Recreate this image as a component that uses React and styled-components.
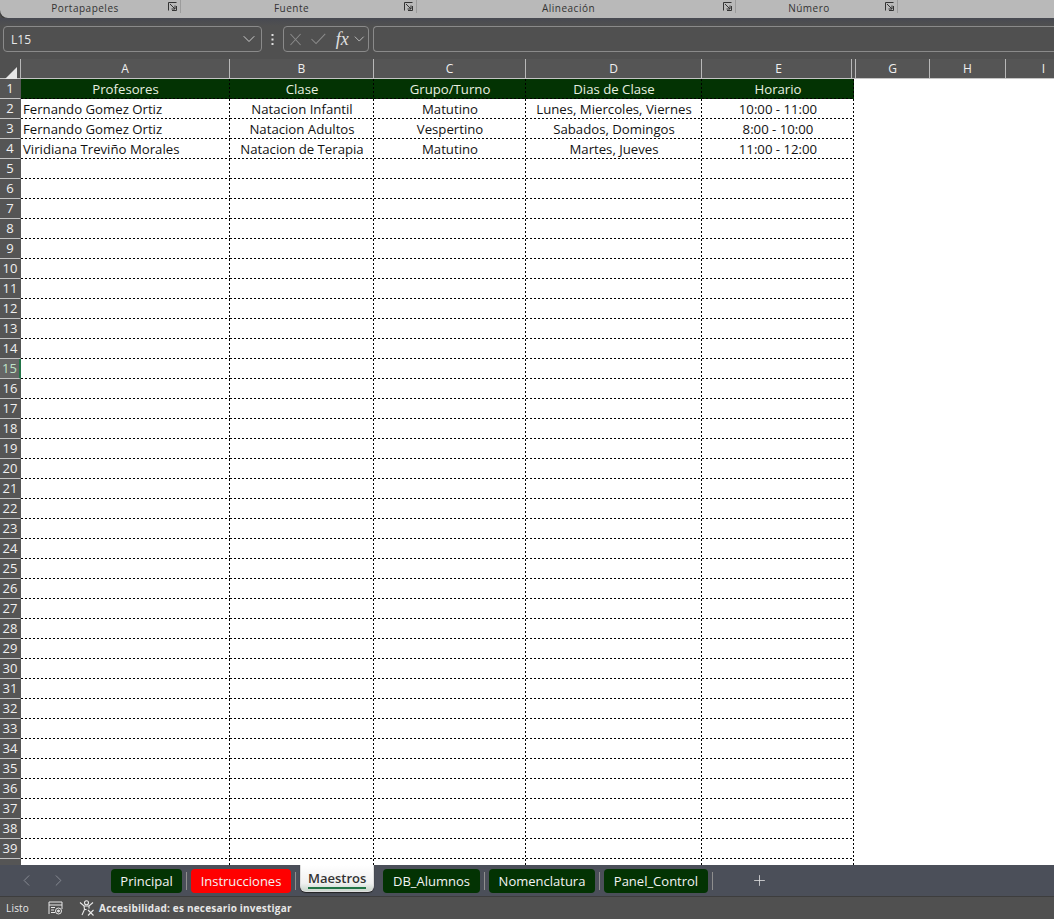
import React from "react";
import styled, { createGlobalStyle } from "styled-components";
import { ChevronDown, ChevronLeft, ChevronRight, Plus } from "lucide-react";

const columns = [
  { name: "A", width: 209 },
  { name: "B", width: 144 },
  { name: "C", width: 152 },
  { name: "D", width: 176 },
  { name: "E", width: 152, head: 150, pad: 4 },
];
const emptyColumns = [
  { name: "G", width: 74 },
  { name: "H", width: 76 },
  { name: "I", width: 76 },
];
const titles = ["Profesores", "Clase", "Grupo/Turno", "Dias de Clase", "Horario"];
const data = [
  ["Fernando Gomez Ortiz", "Natacion Infantil", "Matutino", "Lunes, Miercoles, Viernes", "10:00 - 11:00"],
  ["Fernando Gomez Ortiz", "Natacion Adultos", "Vespertino", "Sabados, Domingos", "8:00 - 10:00"],
  ["Viridiana Treviño Morales", "Natacion de Terapia", "Matutino", "Martes, Jueves", "11:00 - 12:00"],
];
const groups = [
  { label: "Portapapeles", width: 181, inset: 10 },
  { label: "Fuente", width: 236, inset: 14 },
  { label: "Alineación", width: 319, inset: 15 },
  { label: "Número", width: 162, inset: 15 },
];
const sheets = [
  { label: "Principal", width: 71 },
  { label: "Instrucciones", width: 100, color: "#ff0000" },
  { label: "Maestros", active: true },
  { label: "DB_Alumnos", width: 97 },
  { label: "Nomenclatura", width: 106 },
  { label: "Panel_Control", width: 104 },
];

const DialogIcon = () => (
  <svg width="9" height="9" viewBox="0 0 9 9" fill="none" stroke="#333">
    <path d="M0.5 8.5V0.5H8.5M2 2L7 7M7 3.5V7H3.5M8.5 4V8.5H4" strokeWidth="1" />
  </svg>
);

const App = () => {
  const rows = Array.from({ length: 40 }, (_, i) => i + 1);
  return (
    <Page>
      <GlobalStyle />
      <Ribbon>
        {groups.map((g) => (
          <RibbonGroup key={g.label} $width={g.width} $inset={g.inset}>
            <span>{g.label}</span>
            <DialogIcon />
          </RibbonGroup>
        ))}
      </Ribbon>
      <FormulaBar>
        <NameBox>
          L15
          <ChevronDown size={20} strokeWidth={1.1} color="#d8d8d8" />
        </NameBox>
        <Dots>
          <svg width="3" height="11" viewBox="0 0 3 11" fill="#e0e0e0">
            <rect x="0.5" y="0" width="2" height="2" />
            <rect x="0.5" y="4.5" width="2" height="2" />
            <rect x="0.5" y="9" width="2" height="2" />
          </svg>
        </Dots>
        <FormulaButtons>
          <svg width="12" height="13" viewBox="0 0 12 13" fill="none" stroke="#8c8c8c" strokeWidth="1.1">
            <path d="M0.5 0.5L11.5 12.5M11.5 0.5L0.5 12.5" />
          </svg>
          <svg width="16" height="12" viewBox="0 0 16 12" fill="none" stroke="#8c8c8c" strokeWidth="1.1">
            <path d="M0.5 6L5.5 11L15.5 0.5" />
          </svg>
          <Fx>fx</Fx>
          <ChevronDown size={18} strokeWidth={1.2} color="#d0d0d0" />
        </FormulaButtons>
        <FormulaInput />
      </FormulaBar>
      <Sheet>
        <HeaderRow>
          <Corner>
            <svg width="14" height="14" viewBox="0 0 14 14">
              <path d="M13 1V13H1Z" fill="#e6e6e6" />
            </svg>
          </Corner>
          {columns.map((c) => (
            <ColHead key={c.name} $width={c.head || c.width} $pad={c.pad}>{c.name}</ColHead>
          ))}
          <HiddenGap />
          {emptyColumns.map((c) => (
            <ColHead key={c.name} $width={c.width} $pad={c.pad}>{c.name}</ColHead>
          ))}
        </HeaderRow>
        <Rows>
          {rows.map((r) => (
            <Row key={r}>
              <RowHead $selected={r === 15}>{r < 40 ? r : ""}</RowHead>
              {columns.map((c, i) => {
                const text = r === 1 ? titles[i] : data[r - 2]?.[i];
                return (
                  <Cell key={c.name} $width={c.width} $title={r === 1} $left={i === 0 && r > 1}>
                    {text}
                  </Cell>
                );
              })}
            </Row>
          ))}
        </Rows>
      </Sheet>
      <TabBar>
        <TabArrows>
          <ChevronLeft size={19} strokeWidth={1.1} color="#8f939b" />
          <ChevronRight size={19} strokeWidth={1.1} color="#8f939b" />
        </TabArrows>
        <Tabs>
          {sheets.map((s) =>
            s.active ? (
              <ActiveTab key={s.label}>
                <span>{s.label}</span>
              </ActiveTab>
            ) : (
              <Tab key={s.label} $width={s.width} $color={s.color}>{s.label}</Tab>
            )
          )}
        </Tabs>
        <AddSheet>
          <Plus size={17} strokeWidth={1.1} color="#e4e4e4" />
        </AddSheet>
      </TabBar>
      <StatusBar>
        <span>Listo</span>
        <svg width="15" height="14" viewBox="0 0 15 14" fill="none" stroke="#e8e8e8">
          <path d="M1 13V1H14V8M1 4H14M3 6.5H7M3 9H6M3 11.5H7" />
          <circle cx="10.5" cy="10" r="3" />
          <circle cx="10.5" cy="10" r="1" fill="#e8e8e8" />
        </svg>
        <Accessibility>
          <svg width="16" height="16" viewBox="0 0 16 16" fill="none" stroke="#e8e8e8" strokeWidth="1.1">
            <circle cx="7.5" cy="2.8" r="2" />
            <path d="M1 2.5L5 6H10L14 2.5M5 6L5.5 9.5L3 15M10 6V8.5M5.5 9.5H7.5" />
            <path d="M9 10L14.5 15.5M14.5 10L9 15.5" />
          </svg>
          Accesibilidad: es necesario investigar
        </Accessibility>
      </StatusBar>
    </Page>
  );
};

export default App;

const GlobalStyle = createGlobalStyle`
  html, body {
    margin: 0;
    padding: 0;
    overflow: hidden;
    background: #505050;
  }
`;

const Page = styled.div`
  width: 1054px;
  height: 919px;
  display: flex;
  flex-direction: column;
  overflow: hidden;
  font-family: "Open Sans", "Noto Sans", sans-serif;
  background: #505050;
`;

const Ribbon = styled.div`
  height: 18px;
  flex: none;
  display: flex;
  background: #b9b9b9;
  border-radius: 0 0 0 8px;
  box-shadow: 0 1px 2px #2a2a2a;
`;

const RibbonGroup = styled.div`
  width: ${(p) => p.$width}px;
  height: 13px;
  box-sizing: border-box;
  padding-right: 3px;
  position: relative;
  display: flex;
  align-items: center;
  justify-content: flex-end;
  border-right: 1px solid #9c9c9c;
  font-size: 10px;
  letter-spacing: 0.5px;
  color: #333;

  span {
    position: absolute;
    left: 0;
    right: ${(p) => p.$inset}px;
    top: 0;
    text-align: center;
    line-height: 16px;
  }
`;

const FormulaBar = styled.div`
  height: 41px;
  flex: none;
  box-sizing: border-box;
  padding: 8px 0 7px 3px;
  display: flex;
  align-items: stretch;
  background: linear-gradient(#484a52 0, #505050 8px);
`;

const NameBox = styled.div`
  width: 259px;
  box-sizing: border-box;
  padding: 0 2px 0 7px;
  display: flex;
  align-items: center;
  justify-content: space-between;
  border: 1px solid #8a8a8a;
  border-radius: 4px;
  font-size: 12px;
  color: #e8e8e8;
`;

const Dots = styled.div`
  width: 21px;
  display: flex;
  align-items: center;
  justify-content: center;
`;

const FormulaButtons = styled.div`
  width: 86px;
  box-sizing: border-box;
  padding-left: 6px;
  display: flex;
  align-items: center;
  gap: 10px;
  border: 1px solid #8a8a8a;
  border-radius: 4px;

  svg:last-child {
    margin-left: -9px;
  }
`;

const Fx = styled.i`
  width: 16px;
  font-family: "Liberation Serif", serif;
  font-size: 18px;
  line-height: 20px;
  letter-spacing: 0;
  color: #e0e0e0;
`;

const FormulaInput = styled.div`
  flex: 1;
  margin-left: 4px;
  border: 1px solid #8a8a8a;
  border-right: none;
  border-radius: 4px 0 0 4px;
`;

const Sheet = styled.div`
  height: 806px;
  flex: none;
  overflow: hidden;
  background: #fff;
`;

const HeaderRow = styled.div`
  height: 20px;
  display: flex;
  background: #555;
  border-bottom: 1px solid #c4c4c4;
  box-sizing: border-box;
`;

const Corner = styled.div`
  width: 21px;
  flex: none;
  box-sizing: border-box;
  padding: 4px 0 0 4px;
  border-right: 1px solid #b8b8b8;
  background: #505050;
`;

const ColHead = styled.div`
  width: ${(p) => p.$width}px;
  flex: none;
  box-sizing: border-box;
  padding-left: ${(p) => p.$pad || 0}px;
  border-right: 1px solid #b8b8b8;
  text-align: center;
  font-size: 12px;
  line-height: 19px;
  color: #f0f0f0;
`;

const HiddenGap = styled.div`
  width: 4px;
  flex: none;
  box-sizing: border-box;
  border-right: 1px solid #b8b8b8;
`;

const Rows = styled.div`
  display: flex;
  flex-direction: column;
`;

const Row = styled.div`
  height: 20px;
  flex: none;
  display: flex;
`;

const RowHead = styled.div`
  width: 21px;
  flex: none;
  box-sizing: border-box;
  text-align: center;
  font-size: 13px;
  line-height: 19px;
  color: ${(p) => (p.$selected ? "#bfe3c8" : "#f0f0f0")};
  background: ${(p) => (p.$selected ? "#666" : "#555")};
  border-bottom: 1px solid #c4c4c4;
  border-right: ${(p) => (p.$selected ? "2px solid #217346" : "1px solid #555")};
`;

const Cell = styled.div`
  width: ${(p) => p.$width}px;
  flex: none;
  box-sizing: border-box;
  padding-left: ${(p) => (p.$left ? "2px" : "0")};
  text-align: ${(p) => (p.$left ? "left" : "center")};
  font-size: 13.2px;
  line-height: 20px;
  white-space: nowrap;
  overflow: hidden;
  color: ${(p) => (p.$title ? "#e8f0e0" : "#111")};
  background-color: ${(p) => (p.$title ? "#033303" : "#fff")};
  background-image: repeating-linear-gradient(90deg, #000 0 2px, transparent 2px 4px),
    repeating-linear-gradient(180deg, #000 0 2px, transparent 2px 4px);
  background-size: 100% 1px, 1px 100%;
  background-position: left bottom, right top;
  background-repeat: no-repeat;
`;

const TabBar = styled.div`
  height: 32px;
  flex: none;
  box-sizing: border-box;
  display: flex;
  align-items: flex-start;
  background: #4b4f59;
  border-bottom: 1px solid #3d3d3d;
`;

const TabArrows = styled.div`
  width: 111px;
  height: 31px;
  box-sizing: border-box;
  padding-left: 17px;
  flex: none;
  display: flex;
  align-items: center;
  gap: 13px;
`;

const Tabs = styled.div`
  display: flex;
  align-items: flex-start;
  gap: 9px;
`;

const Tab = styled.div`
  width: ${(p) => p.$width}px;
  height: 24px;
  margin-top: 4px;
  position: relative;
  flex: none;
  text-align: center;
  font-size: 13px;
  line-height: 24px;
  color: #f4f4f4;
  border-radius: 4px;
  background: ${(p) => p.$color || "#033303"};

  &::after {
    content: "";
    position: absolute;
    right: -5px;
    top: 3px;
    height: 18px;
    border-right: 1px solid #8e8e8e;
  }
`;

const ActiveTab = styled.div`
  width: 74px;
  height: 27px;
  flex: none;
  box-sizing: border-box;
  text-align: center;
  font-size: 13px;
  font-weight: 600;
  line-height: 26px;
  color: #333;
  border-radius: 0 0 6px 6px;
  background: linear-gradient(#ffffff, #f0f0f0 70%, #c9d6cc);
  border: 1px solid #ddd;
  border-top: none;
  box-shadow: 0 1px 1px #222;

  span {
    display: block;
    margin: 0 7px;
    height: 22px;
    border-bottom: 2px solid #217346;
  }
`;

const AddSheet = styled.div`
  margin-left: 43px;
  height: 31px;
  display: flex;
  align-items: center;
`;

const StatusBar = styled.div`
  height: 22px;
  flex: none;
  box-sizing: border-box;
  padding-left: 6px;
  display: flex;
  align-items: center;
  gap: 19px;
  font-size: 10px;
  letter-spacing: 0.2px;
  color: #e8e8e8;
  background: #505050;
`;

const Accessibility = styled.div`
  display: flex;
  align-items: center;
  gap: 4px;
  margin-left: -3px;
  font-weight: 700;
`;
